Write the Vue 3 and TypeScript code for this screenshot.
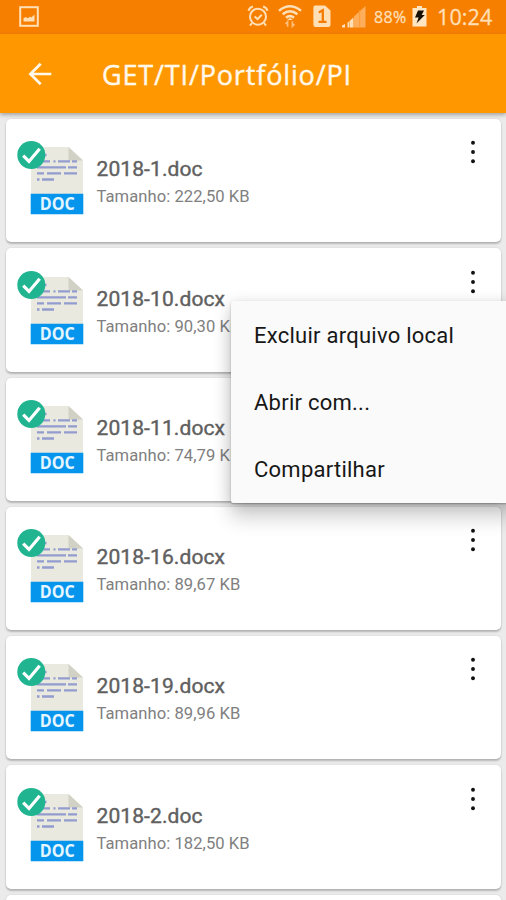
<script setup lang="ts">
interface FileItem {
  name: string
  size: string
}

const files: FileItem[] = [
  { name: '2018-1.doc', size: '222,50 KB' },
  { name: '2018-10.docx', size: '90,30 KB' },
  { name: '2018-11.docx', size: '74,79 KB' },
  { name: '2018-16.docx', size: '89,67 KB' },
  { name: '2018-19.docx', size: '89,96 KB' },
  { name: '2018-2.doc', size: '182,50 KB' },
]

const actions: string[] = ['Excluir arquivo local', 'Abrir com...', 'Compartilhar']
</script>

<template>
  <div class="screen">
    <header class="status">
      <svg class="picture" width="20" height="21" viewBox="0 0 20 21">
        <rect x="1.2" y="1.2" width="17.6" height="18.6" fill="none" stroke="#ffdfb6" stroke-width="2" />
        <path d="M4.5 15.5v-3.3l2-1.2 2 1.3 2.6-1.6 1.3.7 3.1-3v7.1z" fill="#ffdfb6" />
      </svg>
      <div class="indicators">
        <svg class="alarm" width="22" height="22" viewBox="0 0 22 22" fill="none" stroke="#ffdfb6" stroke-width="2">
          <circle cx="11" cy="11.7" r="8" />
          <path d="M1.5 5.8Q2.4 2.2 6 1.4M20.5 5.8Q19.6 2.2 16 1.4M5 18l-2 2.6M17 18l2 2.6M7.6 11.4l2.9 2.7 4.3-4.4" />
        </svg>
        <svg class="wifi" width="24" height="24" viewBox="0 0 24 24" fill="none" stroke="#ffdfb6" stroke-width="2.5">
          <path d="M1 6.8Q12-2.2 23 6.8M4.6 10.3Q12 4.2 19.4 10.3M8 13.7Q12 10.6 16 13.7" />
          <path d="M12 14l-2.8 2h5.6z" fill="#ffdfb6" stroke="none" />
          <path d="M9.6 22.7v-5l-2 2.2M14.4 17.3v5l2-2.2" stroke="#ffbd78" stroke-width="1.7" />
        </svg>
        <svg class="sim" width="18" height="23" viewBox="0 0 18 23">
          <path d="M2 .5h10l5.5 5V20q0 2-2 2H2.4q-2 0-2-2V2.5Q.4.5 2 .5z" fill="#ffdfb6" />
          <path d="M5.8 7.6L9.8 5.3V17.5M5.5 16.8h8" fill="none" stroke="#f57c00" stroke-width="2.3" />
        </svg>
        <svg class="signal" width="24" height="22" viewBox="0 0 24 22">
          <path d="M0 21.5v-2l3-1.5v3.5zM5.5 21.5v-5l1.5-1v6zM7.5 21.5V15l4-3.5v10z" fill="#ffdfb6" />
          <path d="M12 21.5V10.5L23.5 0v21.5z" fill="#ffae5c" />
          <path d="M17.7 4v18" stroke="#fb9a3a" />
        </svg>
        <span class="percent">88%</span>
        <svg class="battery" width="15" height="21" viewBox="0 0 15 21">
          <path d="M5 0h5v2h4.5v18.5H.5V2H5z" fill="#ffe6c3" />
          <path d="M6 4.5h6L9.7 9h3.1L4.5 17.5l2.1-6H3z" fill="#171006" />
        </svg>
        <span class="clock">10:24</span>
      </div>
    </header>

    <nav class="toolbar">
      <svg class="back" width="24" height="24" viewBox="0 0 24 24" fill="none" stroke="#fff8eb" stroke-width="2.7">
        <path d="M23.3 12H3M12.7 1.7L2.4 12l10.3 10.3" />
      </svg>
      <h1>GET/TI/Portfólio/PI</h1>
    </nav>

    <main class="list">
      <article v-for="file in files" :key="file.name" class="card">
        <svg class="doc" width="68" height="76" viewBox="0 0 68 76">
          <path d="M14 7h37.5L66 20.5V54H14z" fill="#e9e9df" />
          <path d="M51.5 7L66 20.5H53q-1.5 0-1.5-1.5z" fill="#d2d1c5" />
          <path
            d="M20 15h9.5M20 21.3h13M36.5 21.3h2M41 21.3h12M55 21.3h5M20 27.4h29M51 27.4h9M20 33.3h7M30 33.3h14M47 33.3h13M20 39.5h2.5M25 39.5h12"
            fill="none" stroke="#929cce" stroke-width="2.3"
          />
          <path d="M13.7 53.7h52.6v20.5H13.7z" fill="#0695ec" />
          <text x="22.8" y="70.4" textLength="35" lengthAdjust="spacingAndGlyphs">DOC</text>
          <circle cx="14.3" cy="15" r="14" fill="#20b590" />
          <path d="M6.2 15.7l5.8 5.8L22.7 8.8" fill="none" stroke="#fff" stroke-width="3.2" />
        </svg>
        <div class="info">
          <h2>{{ file.name }}</h2>
          <p>Tamanho: {{ file.size }}</p>
        </div>
        <svg class="more" width="6" height="24" viewBox="0 0 6 24" fill="#111">
          <circle cx="3" cy="2.7" r="1.95" />
          <circle cx="3" cy="12" r="1.95" />
          <circle cx="3" cy="21.3" r="1.95" />
        </svg>
      </article>
      <article class="card"></article>
    </main>

    <div class="menu">
      <button v-for="action in actions" :key="action" type="button">{{ action }}</button>
    </div>
  </div>
</template>

<style>
body {
  margin: 0;
  overflow: hidden;
}
</style>

<style scoped>
.screen {
  position: relative;
  display: flex;
  flex-direction: column;
  width: 506px;
  height: 900px;
  overflow: hidden;
  background: #ebebeb;
  font-family: Roboto, sans-serif;
}

.status {
  display: flex;
  flex: none;
  justify-content: space-between;
  height: 34px;
  box-sizing: border-box;
  padding: 0 13px 0 19px;
  background: #f77f00;
  color: #ffdfb6;
  font-family: "Open Sans", sans-serif;
}

.picture {
  margin-top: 6px;
}

.indicators {
  display: flex;
  align-items: flex-start;
}

.alarm {
  margin: 5px 9px 0 0;
}

.wifi {
  margin: 4px 11px 0 0;
}

.sim {
  margin: 5px 11px 0 0;
}

.signal {
  margin: 6px 8px 0 0;
}

.percent {
  width: 33px;
  margin-right: 5px;
  font-size: 16px;
  line-height: 34px;
  letter-spacing: 0.3px;
  white-space: nowrap;
  -webkit-text-stroke: 0.3px currentColor;
}

.battery {
  margin: 6px 10px 0 0;
}

.clock {
  width: 56px;
  font-size: 21.5px;
  line-height: 33px;
  letter-spacing: 0.1px;
  white-space: nowrap;
  -webkit-text-stroke: 0.3px currentColor;
}

.toolbar {
  position: relative;
  display: flex;
  flex: none;
  align-items: center;
  height: 79px;
  box-sizing: border-box;
  padding-left: 28px;
  background: #ff9800;
  box-shadow: 0 2px 4px rgba(0, 0, 0, 0.3);
}

h1 {
  margin: 3px 0 0 50px;
  color: #fff8eb;
  font: 400 27px/36px "Open Sans", sans-serif;
  letter-spacing: 0.85px;
  -webkit-text-stroke: 0.4px currentColor;
}

.list {
  display: flex;
  flex-direction: column;
  gap: 6px;
  padding: 6px 5px 0 6px;
}

.card {
  display: flex;
  flex: none;
  align-items: flex-start;
  height: 123.3px;
  box-sizing: border-box;
  padding: 21.3px 25px 0 11px;
  border-radius: 5px;
  background: #fff;
  box-shadow: 0 2px 2px rgba(0, 0, 0, 0.22), 0 0 2px rgba(0, 0, 0, 0.12);
}

.doc text {
  fill: #e4f6ff;
  font: 700 18px "Open Sans", sans-serif;
}

.info {
  flex: 1;
  margin: 14px 0 0 11.5px;
}

h2 {
  margin: 0;
  color: #606060;
  font-size: 21px;
  font-weight: 400;
  line-height: 30px;
  letter-spacing: 0.1px;
  -webkit-text-stroke: 0.4px currentColor;
}

p {
  margin: 0;
  color: #808080;
  font-size: 16.6px;
  line-height: 26px;
  letter-spacing: 0.05px;
}

.menu {
  position: absolute;
  top: 301px;
  left: 231px;
  display: flex;
  flex-direction: column;
  width: 285px;
  height: 202px;
  box-sizing: border-box;
  padding-top: 1px;
  border-radius: 2px;
  background: #fafafa;
  box-shadow: 0 14px 20px rgba(0, 0, 0, 0.2), 0 1px 14px rgba(0, 0, 0, 0.12), 0 1px 2px rgba(0, 0, 0, 0.25);
}

button {
  flex: 1;
  padding: 0 0 0 23px;
  border: 0;
  background: none;
  color: #171717;
  font: 400 22px/28px Roboto, sans-serif;
  letter-spacing: 0.25px;
  text-align: left;
}
</style>
